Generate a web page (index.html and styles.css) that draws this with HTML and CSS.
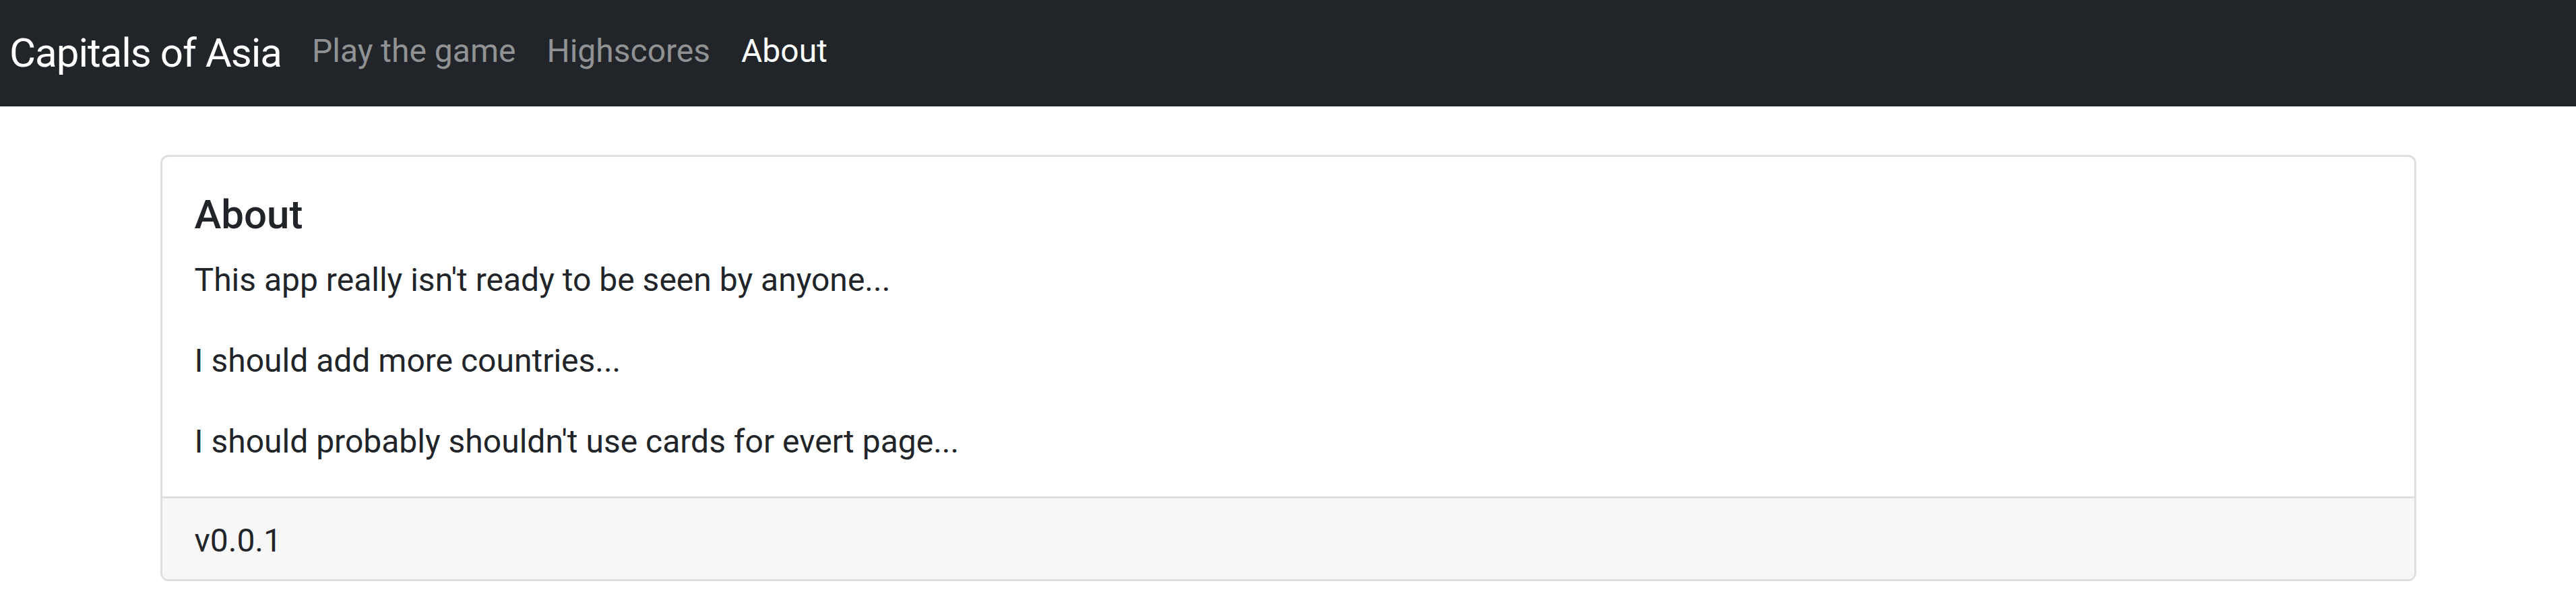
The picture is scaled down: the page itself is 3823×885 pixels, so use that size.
FILE: index.html
```html
<!DOCTYPE html>
<html lang="en">
<head>
<meta charset="utf-8">
<title>Capitals of Asia</title>
<link rel="stylesheet" href="styles.css">
</head>
<body>
<nav class="navbar">
  <a class="brand" href="#">Capitals of Asia</a>
  <ul class="nav-list">
    <li><a class="nav-link" href="#">Play the game</a></li>
    <li><a class="nav-link" href="#">Highscores</a></li>
    <li><a class="nav-link active" href="#">About</a></li>
  </ul>
</nav>
<main class="container">
  <section class="card">
    <div class="card-body">
      <h5 class="card-title">About</h5>
      <p>This app really isn't ready to be seen by anyone...</p>
      <p>I should add more countries...</p>
      <p>I should probably shouldn't use cards for evert page...</p>
    </div>
    <div class="card-footer">v0.0.1</div>
  </section>
</main>
</body>
</html>
```
FILE: styles.css
```css
html, body {
  margin: 0;
  padding: 0;
}
body {
  font-family: Roboto, "Liberation Sans", Arial, sans-serif;
  font-size: 48px;
  line-height: 72px;
  color: #212529;
  background: #fff;
}
a {
  text-decoration: none;
}
.navbar {
  display: flex;
  align-items: center;
  height: 158px;
  background: #212529;
  padding: 0 0 0 14px;
  box-sizing: border-box;
}
.brand {
  font-size: 60px;
  line-height: 90px;
  letter-spacing: -1px;
  color: #fff;
  margin-right: 22px;
}
.nav-list {
  display: flex;
  list-style: none;
  margin: 0;
  padding: 0 0 6px 0;
}
.nav-link {
  display: block;
  padding: 0 23px;
  line-height: 72px;
  color: rgba(255, 255, 255, 0.5);
}
.nav-link.active {
  color: #fff;
}
.container {
  max-width: 3420px;
  margin: 72px auto 0;
  padding: 0 36px;
  box-sizing: border-box;
}
.card {
  border: 3px solid #dfdfdf;
  border-radius: 12px;
  overflow: hidden;
}
.card-body {
  padding: 48px;
}
.card-title {
  font-size: 60px;
  font-weight: 500;
  line-height: 72px;
  padding-top: 2px;
  margin: 0 0 22px;
}
.card-body p {
  padding-top: 3px;
  margin: 0 0 45px;
}
.card-body p:last-child {
  margin-bottom: -3px;
}
.card-footer {
  border-top: 3px solid #dfdfdf;
  background: #f7f7f7;
  padding: 27px 48px 21px;
}
```
